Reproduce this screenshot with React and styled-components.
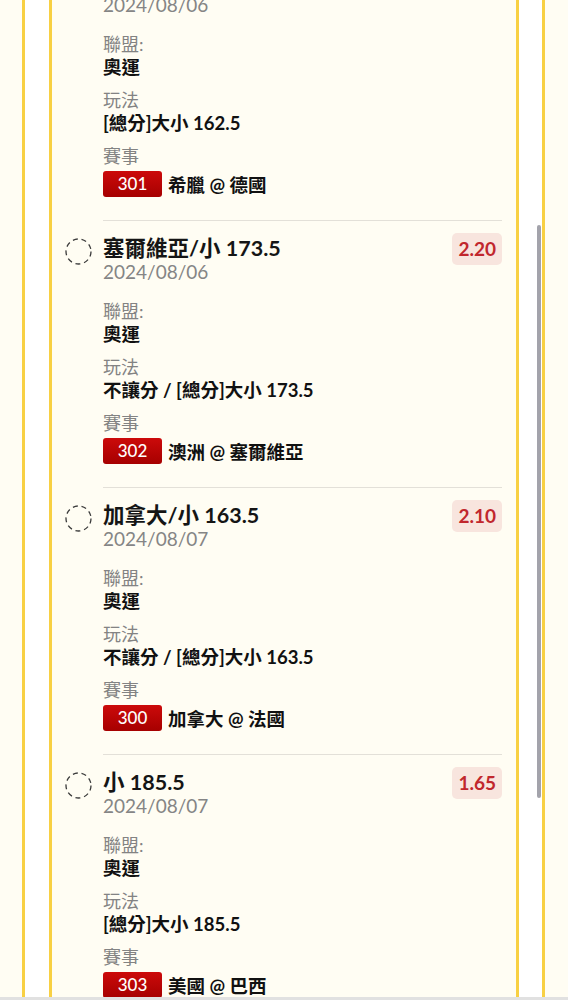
import React from 'react';
import styled, {createGlobalStyle} from 'styled-components';

const yellow = '#f8d043';
const cream = '#fffdf3';

const GlobalStyle = createGlobalStyle`
  body {
    margin: 0;
    background: ${cream};
    font-family: Lato, "Noto Sans CJK TC", sans-serif;
  }
`;

const Page = styled.div`
  display: flex;
  flex-direction: column;
  height: 100vh;
  background: ${cream};
`;

const Main = styled.div`
  flex: 1;
  min-height: 0;
  padding: 0 23px 0 22px;
`;

const Frame = styled.div`
  position: relative;
  height: 100%;
  box-sizing: border-box;
  background: #ffffff;
  border-left: 3px solid ${yellow};
  border-right: 3px solid ${yellow};
  padding: 0 23px 0 24px;
`;

const ScrollThumb = styled.div`
  position: absolute;
  right: 1px;
  top: 225px;
  width: 4px;
  height: 573px;
  border-radius: 2px;
  background: #a3a3ab;
`;

const Panel = styled.div`
  height: 100%;
  box-sizing: border-box;
  background: ${cream};
  border-left: 3px solid ${yellow};
  border-right: 3px solid ${yellow};
  padding: 0 14px 0 13px;
  overflow: hidden;
`;

const List = styled.div`
  margin-top: -46px;
`;

const Item = styled.div`
  display: flex;
`;

const Check = styled.svg`
  flex: none;
  width: 27px;
  height: 27px;
  margin: 17px 11px 0 0;
`;

const Body = styled.div`
  flex: 1;
  min-width: 0;
  padding: 15px 0 23px;
  border-bottom: 1px solid #e3e0d8;
`;

const Head = styled.div`
  display: flex;
  justify-content: space-between;
  align-items: flex-start;
`;

const Title = styled.div`
  font-size: 21.5px;
  line-height: 24px;
  font-weight: 700;
  color: #151515;
`;

const DateText = styled.div`
  font-size: 19px;
  line-height: 23px;
  color: #858585;
`;

const Odds = styled.div`
  margin-top: -3px;
  height: 32px;
  padding: 0 6px;
  border-radius: 5px;
  background: #f8e5de;
  color: #c1272d;
  font-size: 19px;
  font-weight: 700;
  line-height: 32px;
`;

const Field = styled.div`
  margin-top: ${props => props.first ? '17px' : '10px'};
`;

const Label = styled.div`
  font-size: 18px;
  line-height: 23px;
  color: #838383;
`;

const Value = styled.div`
  font-size: 18.5px;
  line-height: 23px;
  font-weight: 700;
  color: #111;
`;

const Match = styled.div`
  display: flex;
  align-items: center;
  margin-top: 3px;
  height: 26px;
  font-size: 18.5px;
  font-weight: 700;
  color: #111;
`;

const Code = styled.span`
  width: 59px;
  height: 26px;
  margin-right: 6px;
  border-radius: 3px;
  background: linear-gradient(#cc0a0a, #a60000);
  color: #fff;
  font-size: 17px;
  font-weight: 500;
  line-height: 26px;
  text-align: center;
`;

const Footer = styled.div`
  flex: none;
  height: 3px;
  background: #e1e1e1;
`;

const bets = [
  {title: '德國/大 162.5', odds: '1.90', date: '2024/08/06', league: '奧運', play: '[總分]大小 162.5', code: '301', match: '希臘 @ 德國'},
  {title: '塞爾維亞/小 173.5', odds: '2.20', date: '2024/08/06', league: '奧運', play: '不讓分 / [總分]大小 173.5', code: '302', match: '澳洲 @ 塞爾維亞'},
  {title: '加拿大/小 163.5', odds: '2.10', date: '2024/08/07', league: '奧運', play: '不讓分 / [總分]大小 163.5', code: '300', match: '加拿大 @ 法國'},
  {title: '小 185.5', odds: '1.65', date: '2024/08/07', league: '奧運', play: '[總分]大小 185.5', code: '303', match: '美國 @ 巴西'},
];

const BetItem = ({bet}) => (
  <Item>
    <Check viewBox="0 0 27 27">
      <circle cx="13.5" cy="13.5" r="12.5" fill="none" stroke="#3a3a3a" strokeWidth="1.3" strokeDasharray="5 3.8" />
    </Check>
    <Body>
      <Head>
        <div>
          <Title>{bet.title}</Title>
          <DateText>{bet.date}</DateText>
        </div>
        <Odds>{bet.odds}</Odds>
      </Head>
      <Field first>
        <Label>聯盟:</Label>
        <Value>{bet.league}</Value>
      </Field>
      <Field>
        <Label>玩法</Label>
        <Value>{bet.play}</Value>
      </Field>
      <Field>
        <Label>賽事</Label>
        <Match>
          <Code>{bet.code}</Code>
          {bet.match}
        </Match>
      </Field>
    </Body>
  </Item>
);

export default function App() {
  return (
    <Page>
      <GlobalStyle />
      <Main>
        <Frame>
          <Panel>
            <List>
              {bets.map(bet => <BetItem key={bet.code} bet={bet} />)}
            </List>
          </Panel>
          <ScrollThumb />
        </Frame>
      </Main>
      <Footer />
    </Page>
  );
}
